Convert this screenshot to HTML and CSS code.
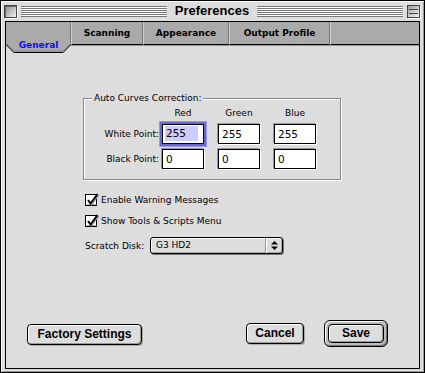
FILE: index.html
```html
<!DOCTYPE html>
<html lang="en">
<head>
    <meta charset="UTF-8">
    <title>Preferences</title>
    <link rel="stylesheet" href="styles.css">
</head>
<body>

<div class="window">
    <div class="titlebar">
        <span class="box close"></span>
        <span class="stripes"></span>
        <span class="title">Preferences</span>
        <span class="stripes"></span>
        <span class="box shade"></span>
    </div>

    <div class="frame">
        <div class="panel">
            <!-- tabs -->
            <div class="tabs">
                <div class="tab-active">
                    <svg class="tab-shape" width="65" height="31" viewBox="0 0 65 31">
                        <polygon points="0,0 65,0 65,22 57,30 8,30 0,22" fill="#aaaaaa"/>
                        <line x1="64.5" y1="0" x2="64.5" y2="22" stroke="#777"/>
                        <polyline points="0.5,22.5 8,30 57,30 64.5,22.5" fill="none" stroke="#888" transform="translate(0,-1)"/>
                        <polyline points="0,22.5 7.8,30.5 57.2,30.5 65,22.5" fill="none" stroke="#000"/>
                    </svg>
                    <span class="tab-label">General</span>
                </div>
                <div class="tab tab-scan">Scanning</div>
                <div class="tab tab-app">Appearance</div>
                <div class="tab tab-out">Output Profile</div>
                <div class="tab tab-rest"></div>
            </div>

            <div class="content">
                <!-- auto curves -->
                <div class="group">
                    <span class="group-title">Auto Curves Correction:</span>
                    <div class="grid">
                        <span></span>
                        <span class="col">Red</span>
                        <span class="col">Green</span>
                        <span class="col">Blue</span>

                        <span class="lbl">White Point:</span>
                        <span class="field focus"><span class="sel">255</span></span>
                        <span class="field">255</span>
                        <span class="field">255</span>

                        <span class="lbl">Black Point:</span>
                        <span class="field">0</span>
                        <span class="field">0</span>
                        <span class="field">0</span>
                    </div>
                </div>

                <div class="opts">
                    <div class="check">
                        <svg width="14" height="14" viewBox="0 0 14 14">
                            <rect x="0.5" y="1.5" width="11" height="11" fill="#fff" stroke="#000"/>
                            <line x1="1.5" y1="11.5" x2="11.5" y2="11.5" stroke="#aaa"/>
                            <path d="M3 7 L5.5 10.5 L12.5 1" fill="none" stroke="#888" stroke-width="1.6" transform="translate(1,1)"/>
                            <path d="M3 7 L5.5 10.5 L12.5 1" fill="none" stroke="#000" stroke-width="1.8"/>
                        </svg>
                        <span>Enable Warning Messages</span>
                    </div>
                    <div class="check">
                        <svg width="14" height="14" viewBox="0 0 14 14">
                            <rect x="0.5" y="1.5" width="11" height="11" fill="#fff" stroke="#000"/>
                            <line x1="1.5" y1="11.5" x2="11.5" y2="11.5" stroke="#aaa"/>
                            <path d="M3 7 L5.5 10.5 L12.5 1" fill="none" stroke="#888" stroke-width="1.6" transform="translate(1,1)"/>
                            <path d="M3 7 L5.5 10.5 L12.5 1" fill="none" stroke="#000" stroke-width="1.8"/>
                        </svg>
                        <span>Show Tools &amp; Scripts Menu</span>
                    </div>
                </div>

                <div class="scratch">
                    <span class="scratch-lbl">Scratch Disk:</span>
                    <div class="popup">
                        <span class="popup-text">G3 HD2</span>
                        <span class="popup-arrows">
                            <svg width="7" height="9" viewBox="0 0 7 9">
                                <polygon points="3.5,0 7,3.5 0,3.5" fill="#000"/>
                                <polygon points="0,5.5 7,5.5 3.5,9" fill="#000"/>
                            </svg>
                        </span>
                    </div>
                </div>

                <!-- buttons -->
                <div class="buttons">
                    <div class="btn btn-factory">Factory Settings</div>
                    <div class="btn btn-cancel">Cancel</div>
                    <div class="ring">
                        <div class="btn btn-save">Save</div>
                    </div>
                </div>
            </div>
        </div>
    </div>
</div>

</body>
</html>
```

FILE: styles.css
```css
html,
body{
    margin:0;
    padding:0;
}
body{
    background:#3b5fc8;
    font-family:"DejaVu Sans", sans-serif;
    font-size:9px;
    color:#000;
}

.window{
    width:425px;
    height:373px;
    box-sizing:border-box;
    border:1px solid #000;
    background:#dddddd;
    box-shadow:inset 1px 1px 0 #fff, inset -1px -1px 0 #999;
}

/* title bar */
.titlebar{
    display:flex;
    align-items:center;
    height:20px;
    padding:0 4px 0 3px;
    gap:4px;
}
.box{
    flex:none;
    width:13px;
    height:13px;
    box-sizing:border-box;
    border:1px solid #444;
    box-shadow:1px 1px 0 #fff;
}
.close{
    background:linear-gradient(135deg, #8a8a8a 0%, #c4c4c4 55%, #f2f2f2 100%);
    box-shadow:1px 1px 0 #fff, inset 1px 1px 0 #666;
}
.shade{
    background:
        linear-gradient(#444, #444) 1px 3px / 9px 1px no-repeat,
        linear-gradient(#444, #444) 1px 7px / 9px 1px no-repeat,
        linear-gradient(135deg, #9a9a9a 0%, #cfcfcf 55%, #f2f2f2 100%);
}
.stripes{
    flex:1;
    height:11px;
    background:repeating-linear-gradient(to bottom, #777 0 1px, #fff 1px 2px);
}
.title{
    font-family:"Liberation Sans", Arial, sans-serif;
    font-weight:bold;
    font-size:13px;
    line-height:20px;
    padding:0 4px;
}

.frame{
    padding:0 4px 3px 4px;
}
.panel{
    height:348px;
    box-sizing:border-box;
    border:1px solid #000;
    background:#dddddd;
    display:flex;
    flex-direction:column;
}

/* tabs */
.tabs{
    display:flex;
    align-items:flex-start;
    height:23px;
    flex:none;
}
.tab{
    box-sizing:border-box;
    height:23px;
    background:#aaaaaa;
    border-bottom:1px solid #000;
    border-left:1px solid #d0d0d0;
    border-right:1px solid #777;
    font-weight:bold;
    font-size:9px;
    display:flex;
    align-items:center;
    justify-content:center;
    padding-bottom:1px;
}
.tab-scan{ width:72px; }
.tab-app{ width:86px; }
.tab-out{ width:101px; }
.tab-rest{
    flex:1;
    border-right:none;
}
.tab-active{
    position:relative;
    z-index:1;
    width:65px;
    height:31px;
    flex:none;
    margin-bottom:-8px;
    display:flex;
    justify-content:center;
}
.tab-shape{
    position:absolute;
    left:0;
    top:0;
}
.tab-label{
    position:relative;
    margin-top:18px;
    line-height:11px;
    font-weight:bold;
    font-size:9px;
    color:#0d0dff;
}

.content{
    flex:1;
    display:flex;
    flex-direction:column;
    box-shadow:inset 0 1px 0 #999;
}

/* auto curves */
.group{
    position:relative;
    margin:53px 0 0 77px;
    width:258px;
    height:82px;
    box-sizing:border-box;
    border:1px solid #888;
    box-shadow:1px 1px 0 #fff, inset 1px 1px 0 #fff;
}
.group-title{
    position:absolute;
    top:-7px;
    left:8px;
    padding:0 2px;
    line-height:12px;
    background:#dddddd;
}
.grid{
    display:grid;
    grid-template-columns:78px 56px 56px 42px;
    grid-template-rows:12px 20px 20px;
    row-gap:5px;
    padding-top:8px;
}
.col{
    width:42px;
    text-align:center;
    line-height:12px;
}
.lbl{
    text-align:right;
    padding-right:3px;
    line-height:20px;
}
.field{
    width:42px;
    height:20px;
    box-sizing:border-box;
    border:1px solid #000;
    background:#fff;
    box-shadow:-1px -1px 0 #999, 1px 1px 0 #fff;
    font-size:10.5px;
    line-height:18px;
    padding-left:3px;
}
.focus{
    box-shadow:0 0 0 2px #6767cf, 0 0 0 3px #9a9adf;
    padding-left:2px;
}
.sel{
    display:inline-block;
    background:#ccccff;
    line-height:15px;
    padding:0 12px 0 1px;
    vertical-align:top;
    margin-top:1px;
}

/* options */
.opts{
    margin:14px 0 0 79px;
    display:flex;
    flex-direction:column;
    gap:9px;
}
.check{
    display:flex;
    align-items:center;
    gap:2px;
    height:12px;
}
.check svg{
    margin-top:-1px;
}

.scratch{
    margin:10px 0 0 79px;
    display:flex;
    align-items:center;
    gap:4px;
}
.scratch-lbl{
    width:61px;
}
.popup{
    width:133px;
    height:17px;
    box-sizing:border-box;
    border:1px solid #000;
    border-radius:3px;
    background:#dddddd;
    box-shadow:1px 1px 0 #777, inset 1px 1px 0 #fff, inset -1px -1px 0 #aaa;
    display:flex;
}
.popup-text{
    flex:1;
    padding-left:5px;
    line-height:15px;
}
.popup-arrows{
    width:16px;
    border-left:1px solid #999;
    box-shadow:inset 1px 0 0 #fff;
    display:flex;
    align-items:center;
    justify-content:center;
}

/* buttons */
.buttons{
    margin:66px 31px 0 21px;
    display:flex;
    align-items:center;
}
.btn{
    height:21px;
    box-sizing:border-box;
    border:1px solid #000;
    border-radius:4px;
    background:#dddddd;
    box-shadow:inset 1px 1px 0 #fff, inset -1px -1px 0 #999, 1px 1px 0 #aaa;
    font-family:"Liberation Sans", Arial, sans-serif;
    font-weight:bold;
    font-size:12px;
    line-height:19px;
    text-align:center;
}
.btn-factory{ width:115px; margin-top:2px; }
.btn-cancel{ width:58px; margin-left:auto; }
.ring{
    margin-left:20px;
    width:64px;
    height:27px;
    box-sizing:border-box;
    border:1px solid #000;
    border-radius:6px;
    padding:3px;
    background:#bbbbbb;
    box-shadow:inset 1px 1px 0 #fff, inset -1px -1px 0 #777;
}
.btn-save{
    width:100%;
    height:19px;
    line-height:17px;
    box-shadow:inset 1px 1px 0 #fff, inset -1px -1px 0 #999;
}
```
